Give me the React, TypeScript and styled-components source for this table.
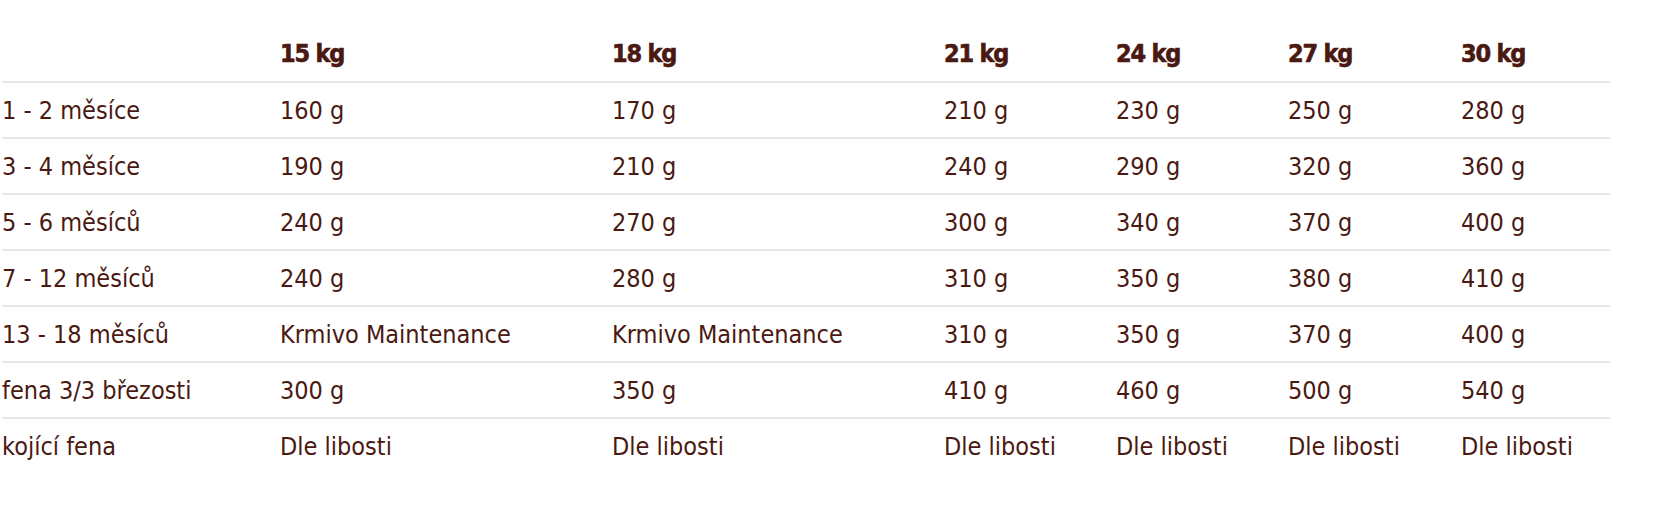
import React from 'react'
import styled, { createGlobalStyle } from 'styled-components'

const GlobalStyle = createGlobalStyle`
  html, body {
    margin: 0;
    padding: 0;
    background: #ffffff;
  }
`

const weights = ['15 kg', '18 kg', '21 kg', '24 kg', '27 kg', '30 kg']

const rows: string[][] = [
  ['1 - 2 měsíce', '160 g', '170 g', '210 g', '230 g', '250 g', '280 g'],
  ['3 - 4 měsíce', '190 g', '210 g', '240 g', '290 g', '320 g', '360 g'],
  ['5 - 6 měsíců', '240 g', '270 g', '300 g', '340 g', '370 g', '400 g'],
  ['7 - 12 měsíců', '240 g', '280 g', '310 g', '350 g', '380 g', '410 g'],
  ['13 - 18 měsíců', 'Krmivo Maintenance', 'Krmivo Maintenance', '310 g', '350 g', '370 g', '400 g'],
  ['fena 3/3 březosti', '300 g', '350 g', '410 g', '460 g', '500 g', '540 g'],
  ['kojící fena', 'Dle libosti', 'Dle libosti', 'Dle libosti', 'Dle libosti', 'Dle libosti', 'Dle libosti'],
]

const colWidths = [278, 332, 332, 172, 172, 173, 149]

const App = () => {
  return (
    <>
      <GlobalStyle />
      <Page>
        <Table>
          <colgroup>
            {colWidths.map((w, i) => (
              <col key={i} style={{ width: w }} />
            ))}
          </colgroup>
          <thead>
            <Row>
              <HeadCell />
              {weights.map((w) => (
                <HeadCell key={w}>{w}</HeadCell>
              ))}
            </Row>
          </thead>
          <tbody>
            {rows.map((r) => (
              <Row key={r[0]}>
                {r.map((c, i) => (
                  <Cell key={i}>{c}</Cell>
                ))}
              </Row>
            ))}
          </tbody>
        </Table>
      </Page>
    </>
  )
}

export default App

const Page = styled.div`
  width: 1666px;
  min-height: 529px;
  padding: 26px 0 0 2px;
  box-sizing: border-box;
  background: #ffffff;
`
const Table = styled.table`
  width: 1608px;
  table-layout: fixed;
  border-collapse: collapse;
  border-spacing: 0;
  color: #4a1912;
  font-family: "DejaVu Sans Condensed", "DejaVu Sans", sans-serif;
  font-stretch: condensed;
`
const Row = styled.tr`
  height: 56px;
  border-bottom: 2px solid #e6e6e6;
  tbody &:last-child {
    border-bottom: none;
  }
`
const HeadCell = styled.th`
  padding: 0;
  text-align: left;
  vertical-align: middle;
  font-size: 25px;
  font-weight: 700;
  letter-spacing: -1.2px;
  -webkit-text-stroke: 0.6px #4a1912;
  white-space: nowrap;
`
const Cell = styled.td`
  padding: 0;
  text-align: left;
  vertical-align: middle;
  font-size: 25px;
  font-weight: 400;
  white-space: nowrap;
`
